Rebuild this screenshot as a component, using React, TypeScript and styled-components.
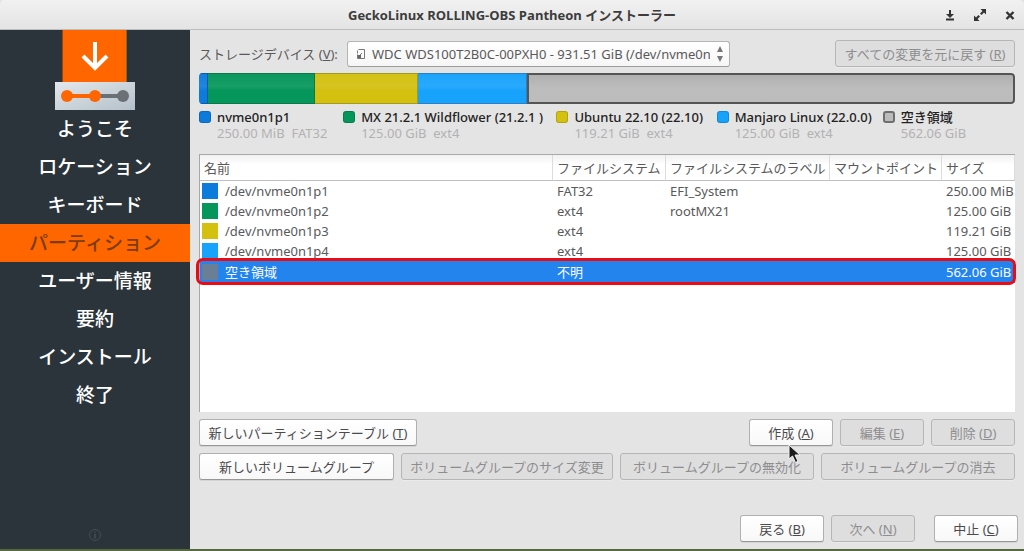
import React from "react";
import styled, { createGlobalStyle } from "styled-components";

const GlobalStyle = createGlobalStyle`
  *, *::before, *::after { box-sizing: border-box; }
  body {
    margin: 0;
    background: #e4e4e4;
    color: #59595b;
    font: 13px/20px "Noto Sans", "Noto Sans CJK JP", sans-serif;
  }
  button, select { font: inherit; color: inherit; }
`;

const Window = styled.div`
  display: flex;
  flex-direction: column;
  min-height: 100vh;
  background: #e4e4e4;
  border-bottom: 2px solid #55693c;
`;

const TitleBar = styled.header`
  display: grid;
  grid-template-columns: 1fr auto 1fr;
  align-items: center;
  height: 30px;
  padding: 0 6px;
  background: linear-gradient(#f1f1f1, #e4e4e4);
  border-bottom: 1px solid #bdbdbd;
  border-radius: 5px 5px 0 0;
`;

const Title = styled.h1`
  grid-column: 2;
  margin: 0;
  font-family: "Open Sans", "Noto Sans CJK JP", sans-serif;
  font-size: 13px;
  font-weight: 700;
  color: #3c3c3c;
  white-space: nowrap;
`;

const WindowControls = styled.div`
  display: flex;
  justify-content: flex-end;
  gap: 14px;
`;

const WindowButton = styled.button`
  display: flex;
  padding: 0;
  border: 0;
  background: none;
  color: #333;
`;

const Body = styled.div`
  display: flex;
  flex: 1;
`;

const Sidebar = styled.aside`
  display: flex;
  flex-direction: column;
  align-items: center;
  flex: 0 0 190px;
  background: #2b343a;
`;

const Steps = styled.ol`
  width: 100%;
  margin: 0;
  padding: 0;
  list-style: none;
`;

const Step = styled.li<{ $current: boolean }>`
  height: 38px;
  font-size: 19px;
  font-weight: 500;
  line-height: 38px;
  text-align: center;
  color: ${(p) => (p.$current ? "#7b3c10" : "#ffffff")};
  background: ${(p) => (p.$current ? "#ff6600" : "transparent")};
`;

const InfoButton = styled.button`
  display: flex;
  margin: auto 0 6px;
  padding: 0;
  border: 0;
  background: none;
  color: #454d51;
`;

const Main = styled.main`
  display: flex;
  flex-direction: column;
  flex: 1;
  min-width: 0;
  padding: 10px 6px 7px 9px;
`;

const Content = styled.div`
  display: flex;
  flex-direction: column;
  flex: 1;
  padding-right: 3px;
`;

const DeviceRow = styled.div`
  display: flex;
  align-items: center;
`;

const DeviceLabel = styled.label`
  flex: 0 0 148px;
  white-space: nowrap;
`;

const Combo = styled.div`
  display: flex;
  align-items: center;
  gap: 6px;
  width: 383px;
  height: 26px;
  padding: 0 5px 0 8px;
  background: linear-gradient(#ffffff, #f6f6f6);
  border: 1px solid #b4b4b4;
  border-bottom-color: #9c9c9c;
  border-radius: 3px;
`;

const DeviceSelect = styled.select`
  flex: 1;
  min-width: 0;
  height: 24px;
  padding: 0;
  border: 0;
  outline: 0;
  background: none;
  appearance: none;
`;

const Button = styled.button<{ $width?: number }>`
  position: relative;
  flex: 0 0 auto;
  width: ${(p) => (p.$width ? `${p.$width}px` : "auto")};
  height: 27px;
  padding: 0 7px;
  white-space: nowrap;
  color: #4b4b4d;
  background: linear-gradient(#ffffff, #f8f8f8);
  border: 1px solid #b0b0b0;
  border-bottom-color: #979797;
  border-radius: 3px;
  box-shadow: 0 1px 0 #d4d4d4;

  &:disabled {
    color: #8d8d8f;
    background: #dedede;
    border-color: #b6b6b6;
    box-shadow: 0 1px 0 #ebebeb;
  }
`;

const Spacer = styled.span`
  flex: 1;
`;

const Usage = styled.div`
  display: flex;
  height: 31px;
  margin-top: 6px;
  overflow: hidden;
  border-radius: 4px;
  background: #bdbdbd;
`;

const Segment = styled.div<{ $share: number; $color: string; $edge: string; $free?: boolean }>`
  flex: ${(p) => p.$share} 1 0;
  background: ${(p) =>
    p.$free
      ? "linear-gradient(#b0b0b0, #bdbdbd 50%, #bcbcbc)"
      : `linear-gradient(rgba(255,255,255,0.02), rgba(255,255,255,0.08) 42%, transparent 58%), ${p.$color}`};
  border: ${(p) => (p.$free ? "2px" : "1px")} solid ${(p) => p.$edge};
  border-left-width: ${(p) => (p.$free ? "2px" : "0")};
  border-radius: ${(p) => (p.$free ? "0 4px 4px 0" : "0")};
`;

const Legend = styled.ul`
  display: grid;
  grid-template-columns: 144fr 213fr 160fr 166fr 132fr;
  height: 50px;
  margin: 0;
  padding: 5px 0 0;
  list-style: none;
`;

const LegendItem = styled.li`
  display: flex;
  gap: 6px;
  white-space: nowrap;
  line-height: 16px;
`;

const LegendSwatch = styled.span<{ $color: string; $free: boolean }>`
  flex: 0 0 12px;
  height: 12px;
  margin-top: 2px;
  background: ${(p) => p.$color};
  border: ${(p) => (p.$free ? "2px solid #6f6f6f" : "1px solid rgba(0,0,0,0.15)")};
  border-radius: 3px;
`;

const LegendName = styled.div`
  font-weight: 500;
  color: #222;
`;

const LegendDetail = styled.div`
  color: #b2b2b2;
  white-space: pre;
`;

const TableFrame = styled.div`
  flex: 1;
  min-height: 240px;
  background: #fff;
  border-top: 1px solid #a8a8a8;
  border-left: 1px solid #a8a8a8;
`;

const Table = styled.table`
  width: 100%;
  table-layout: fixed;
  border-collapse: separate;
  border-spacing: 0;
`;

const HeadCell = styled.th`
  height: 26px;
  padding: 0 4px;
  font-weight: 400;
  text-align: left;
  white-space: nowrap;
  background: linear-gradient(#f1f1f1, #fff 40%);
  border-right: 1px solid #dcdcdc;
  border-bottom: 1px solid #bfbfbf;
`;

const Row = styled.tr<{ $selected: boolean }>`
  position: relative;
  height: ${(p) => (p.$selected ? "22px" : "20px")};
  color: ${(p) => (p.$selected ? "#fff" : "inherit")};
  background: ${(p) => (p.$selected ? "#2384ee" : "transparent")};
`;

const SelectedMark = styled.span`
  position: absolute;
  inset: -3px -1px -2px -4px;
  border: 3px solid #ec0a14;
  border-radius: 7px;
`;

const Cell = styled.td`
  padding: 0 4px;
  line-height: 20px;
  white-space: nowrap;
`;

const NameCell = styled.div`
  display: flex;
  align-items: center;
  gap: 7px;
`;

const Swatch = styled.span<{ $color: string }>`
  flex: 0 0 16px;
  height: 16px;
  margin-left: -2px;
  background: ${(p) => p.$color};
`;

const ButtonRow = styled.div`
  display: flex;
  gap: 7px;
  margin-top: 7px;
`;

const WizardRow = styled.div`
  display: flex;
  justify-content: flex-end;
  gap: 7px;
  padding-top: 35px;
`;

const CancelButton = styled(Button)`
  margin-left: 12px;
`;

const Pointer = styled.svg`
  position: absolute;
  left: 38px;
  top: 24px;
  z-index: 1;
`;

type Partition = {
  name: string;
  label: string;
  fs: string;
  fsLabel: string;
  size: string;
  detail: string;
  color: string;
  edge: string;
  share: number;
};

const partitions: Partition[] = [
  { name: "/dev/nvme0n1p1", label: "nvme0n1p1", fs: "FAT32", fsLabel: "EFI_System", size: "250.00 MiB", detail: "250.00 MiB  FAT32", color: "#0d7bdc", edge: "#0a5ca6", share: 8 },
  { name: "/dev/nvme0n1p2", label: "MX 21.2.1 Wildflower (21.2.1 )", fs: "ext4", fsLabel: "rootMX21", size: "125.00 GiB", detail: "125.00 GiB  ext4", color: "#04965a", edge: "#0b7a48", share: 107 },
  { name: "/dev/nvme0n1p3", label: "Ubuntu 22.10 (22.10)", fs: "ext4", fsLabel: "", size: "119.21 GiB", detail: "119.21 GiB  ext4", color: "#d3c00f", edge: "#a59a20", share: 103 },
  { name: "/dev/nvme0n1p4", label: "Manjaro Linux (22.0.0)", fs: "ext4", fsLabel: "", size: "125.00 GiB", detail: "125.00 GiB  ext4", color: "#17a2fc", edge: "#2b7fc2", share: 109 },
  { name: "空き領域", label: "空き領域", fs: "不明", fsLabel: "", size: "562.06 GiB", detail: "562.06 GiB", color: "#bcbcbc", edge: "#555555", share: 488 },
];

const steps = ["ようこそ", "ロケーション", "キーボード", "パーティション", "ユーザー情報", "要約", "インストール", "終了"];
const currentStep = "パーティション";

const Logo = () => (
  <svg width="80" height="80" viewBox="0 0 80 80" aria-hidden="true">
    <defs>
      <linearGradient id="plate" x1="0" y1="0" x2="1" y2="1">
        <stop offset="0" stopColor="#e3e8ec" />
        <stop offset="1" stopColor="#b4c0c9" />
      </linearGradient>
    </defs>
    <rect x="7" y="0" width="65" height="52" fill="#ff6600" />
    <path d="M7.500 0v52" stroke="#a53d10" />
    <path d="M71.500 0v52" stroke="#8a6a10" />
    <path d="M40 12v25M28 26l12 12 12-12" fill="none" stroke="#fff" strokeWidth="4" />
    <rect y="52" width="80" height="28" fill="url(#plate)" />
    <path d="M12 66h28" stroke="#ff6600" strokeWidth="4" />
    <path d="M40 66h28" stroke="#6a7075" strokeWidth="4" />
    <circle cx="12" cy="66" r="6" fill="#ff6600" />
    <circle cx="40" cy="66" r="6" fill="#ff6600" />
    <circle cx="68" cy="66" r="6" fill="#6a7075" />
  </svg>
);

const App = () => (
  <Window>
    <GlobalStyle />
    <TitleBar>
      <Title>GeckoLinux ROLLING-OBS Pantheon インストーラー</Title>
      <WindowControls>
        <WindowButton aria-label="最小化">
          <svg width="16" height="16" viewBox="0 0 16 16" fill="currentColor">
            <path d="M7 3h2v4h3l-4 4-4-4h3zM4 11.500h8v2H4z" />
          </svg>
        </WindowButton>
        <WindowButton aria-label="最大化">
          <svg width="16" height="16" viewBox="0 0 16 16" fill="currentColor">
            <path d="M8.500 2H14v5.500l-2-2-2.500 2.500-1.500-1.500L10.500 4zM2 8.500l2 2L6.500 8 8 9.500 5.500 12l2 2H2z" />
          </svg>
        </WindowButton>
        <WindowButton aria-label="閉じる">
          <svg width="16" height="16" viewBox="0 0 16 16" stroke="currentColor" strokeWidth="2.400">
            <path d="M4.500 5l7 7M11.500 5l-7 7" />
          </svg>
        </WindowButton>
      </WindowControls>
    </TitleBar>
    <Body>
      <Sidebar>
        <Logo />
        <Steps>
          {steps.map((step) => (
            <Step key={step} $current={step === currentStep}>{step}</Step>
          ))}
        </Steps>
        <InfoButton aria-label="情報">
          <svg width="16" height="16" viewBox="0 0 16 16" fill="none" stroke="currentColor">
            <circle cx="8" cy="8" r="5.500" />
            <path d="M8 4.500v1M8 7v4.500" strokeWidth="1.500" />
          </svg>
        </InfoButton>
      </Sidebar>
      <Main>
        <Content>
          <DeviceRow>
            <DeviceLabel htmlFor="device">ストレージデバイス (<u>V</u>):</DeviceLabel>
            <Combo>
              <svg width="10" height="12" viewBox="0 0 10 12" fill="none" stroke="#77777a" aria-hidden="true">
                <path d="M2.500 1.500h6v9h-7v-4" />
                <path d="M1.500 5.500v-3M6 5L3.500 7.500" />
                <path d="M2 7h3v3H2z" fill="#66666a" stroke="none" />
              </svg>
              <DeviceSelect id="device">
                <option>WDC WDS100T2B0C-00PXH0 - 931.51 GiB (/dev/nvme0n1)</option>
              </DeviceSelect>
              <svg width="8" height="16" viewBox="0 0 8 16" fill="#77777a" aria-hidden="true">
                <path d="M4 0l3 6H1zM4 16l3-6H1z" />
              </svg>
            </Combo>
            <Spacer />
            <Button disabled $width={180}>すべての変更を元に戻す (<u>R</u>)</Button>
          </DeviceRow>
          <Usage>
            {partitions.map((p) => (
              <Segment key={p.name} $share={p.share} $color={p.color} $edge={p.edge} $free={p.fs === "不明"} />
            ))}
          </Usage>
          <Legend>
            {partitions.map((p) => (
              <LegendItem key={p.name}>
                <LegendSwatch $color={p.color} $free={p.fs === "不明"} />
                <div>
                  <LegendName>{p.label}</LegendName>
                  <LegendDetail>{p.detail}</LegendDetail>
                </div>
              </LegendItem>
            ))}
          </Legend>
          <TableFrame>
            <Table>
              <colgroup>
                <col />
                <col style={{ width: 113 }} />
                <col style={{ width: 164 }} />
                <col style={{ width: 112 }} />
                <col style={{ width: 73 }} />
              </colgroup>
              <thead>
                <tr>
                  <HeadCell>名前</HeadCell>
                  <HeadCell>ファイルシステム</HeadCell>
                  <HeadCell>ファイルシステムのラベル</HeadCell>
                  <HeadCell>マウントポイント</HeadCell>
                  <HeadCell>サイズ</HeadCell>
                </tr>
              </thead>
              <tbody>
                {partitions.map((p) => {
                  const selected = p.name === "空き領域";
                  return (
                    <Row key={p.name} $selected={selected} aria-selected={selected}>
                      <Cell>
                        <NameCell>
                          <Swatch $color={selected ? "#6a7f96" : p.color} />
                          {p.name}
                        </NameCell>
                        {selected && <SelectedMark />}
                      </Cell>
                      <Cell>{p.fs}</Cell>
                      <Cell>{p.fsLabel}</Cell>
                      <Cell />
                      <Cell>{p.size}</Cell>
                    </Row>
                  );
                })}
              </tbody>
            </Table>
          </TableFrame>
          <ButtonRow>
            <Button $width={218}>新しいパーティションテーブル (<u>T</u>)</Button>
            <Spacer />
            <Button $width={84}>
              作成 (<u>A</u>)
              <Pointer width="14" height="20" viewBox="0 0 14 20" aria-hidden="true">
                <path d="M1 1v14l3.500-3 3 6.500 2.500-1.200-3-6.300h5z" fill="#1c1c1c" stroke="#f2f2f2" />
              </Pointer>
            </Button>
            <Button disabled $width={84}>編集 (<u>E</u>)</Button>
            <Button disabled $width={84}>削除 (<u>D</u>)</Button>
          </ButtonRow>
          <ButtonRow>
            <Button $width={195}>新しいボリュームグループ</Button>
            <Button disabled $width={212}>ボリュームグループのサイズ変更</Button>
            <Button disabled $width={194}>ボリュームグループの無効化</Button>
            <Button disabled $width={194}>ボリュームグループの消去</Button>
          </ButtonRow>
        </Content>
        <WizardRow>
          <Button $width={84}>戻る (<u>B</u>)</Button>
          <Button disabled $width={84}>次へ (<u>N</u>)</Button>
          <CancelButton $width={84}>中止 (<u>C</u>)</CancelButton>
        </WizardRow>
      </Main>
    </Body>
  </Window>
);

export default App;
